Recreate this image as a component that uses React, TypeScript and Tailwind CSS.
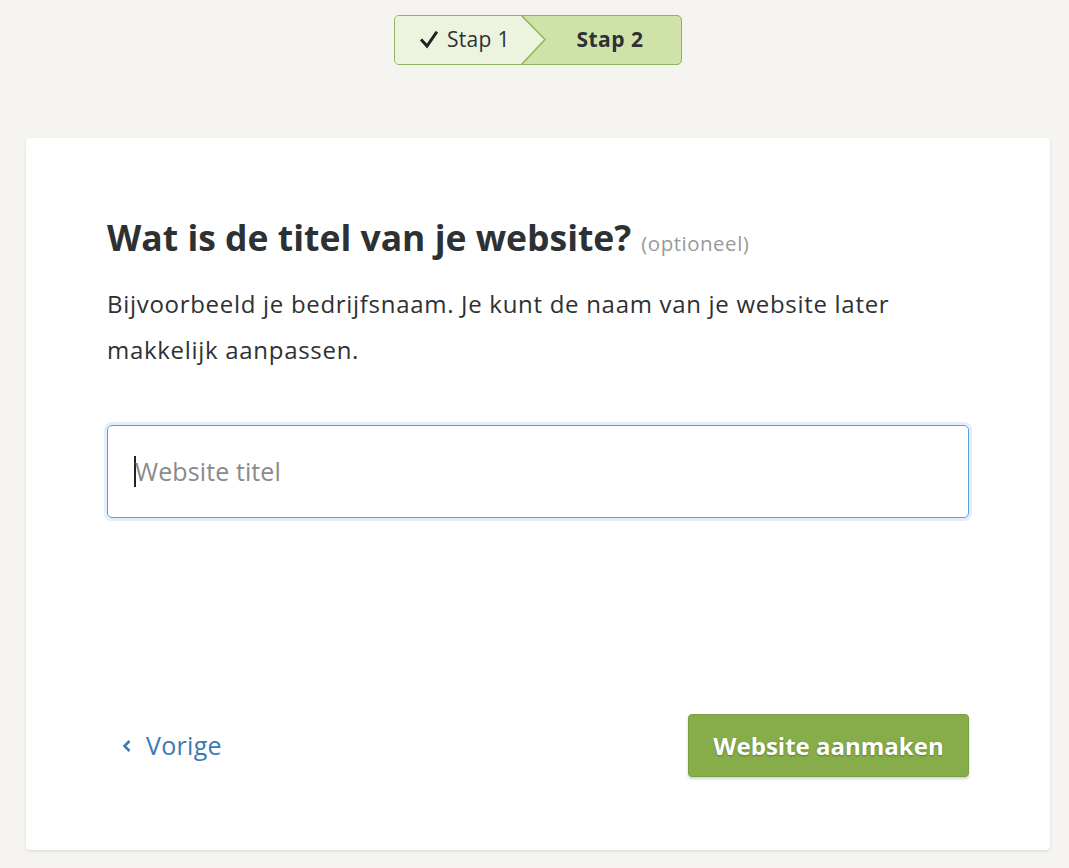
import React from "react";

export default function App() {
  return (
    <div
      className="h-[868px] w-full overflow-hidden bg-[#f5f4f0] pt-[15px] text-[#2d3133]"
      style={{ fontFamily: "'Open Sans', Lato, sans-serif" }}
    >
      <div className="flex justify-center pl-[7px]">
        <div className="relative flex h-[50px] w-[288px] overflow-hidden rounded-[5px] border border-[#8ab85a] bg-[#cfe2a8]">
          <div
            className="flex w-[150px] items-center bg-[#ecf4de] pl-[25px] text-[21px] tracking-[0.3px]"
            style={{ clipPath: "polygon(0 0, 126px 0, 150px 50%, 126px 100%, 0 100%)" }}
          >
            <svg width="18" height="18" viewBox="0 0 18 18" className="mr-[9px]">
              <path d="M2 9.5 L7 15 L16 2" fill="none" stroke="#222" strokeWidth="3" strokeLinecap="square" />
            </svg>
            <span>Stap 1</span>
          </div>
          <svg className="absolute left-[125px] top-[-1px]" width="27" height="50" viewBox="0 0 27 50">
            <path d="M1 0 L25 24.5 L1 50" fill="none" stroke="#8ab85a" strokeWidth="1.5" />
          </svg>
          <div className="flex flex-1 items-center justify-center pr-[6px] text-[21px] font-bold tracking-[0.5px]">Stap 2</div>
        </div>
      </div>

      <div className="ml-[26px] mr-[19px] mt-[73px] flex h-[712px] flex-col rounded-[4px] bg-white px-[81px] pt-[77px] pb-[72px] shadow-[0_1px_3px_rgba(0,0,0,0.12)]">
        <h1 className="flex items-baseline text-[35.5px] font-bold leading-[44px] text-[#2d3133]">
          Wat is de titel van je website?
          <span className="ml-[10px] text-[20.5px] font-normal tracking-[0.5px] text-[#9a9a9a]">(optioneel)</span>
        </h1>
        <p className="mt-[16px] text-[24px] leading-[46px] tracking-[0.7px] text-[#2d3133]">
          Bijvoorbeeld je bedrijfsnaam. Je kunt de naam van je website later
          <br />
          makkelijk aanpassen.
        </p>
        <div className="mt-[52px] rounded-[5px] shadow-[0_0_0_3px_#e3eef9]">
          <div className="flex h-[93px] items-center rounded-[5px] border border-[#5b9fd8] bg-white pl-[26px]">
            <span className="mr-[-1px] h-[31px] w-[2px] bg-[#222]" />
            <span className="text-[25px] tracking-[0.1px] text-[#8a8a8a]">Website titel</span>
          </div>
        </div>
        <div className="mt-auto flex items-center justify-between">
          <a className="flex items-center pl-[15px] text-[25px] tracking-[0.3px] text-[#3b79b3]">
            <svg width="10" height="14" viewBox="0 0 10 14" className="mr-[14px]">
              <path d="M7.5 2 L2.5 7 L7.5 12" fill="none" stroke="#3b79b3" strokeWidth="2.6" />
            </svg>
            Vorige
          </a>
          <button className="mb-[1px] h-[63px] w-[281px] rounded-[4px] border border-[#7a9f40] bg-[#86ad4a] text-[24px] font-bold text-white shadow-[0_2px_3px_rgba(0,0,0,0.18)] [text-shadow:0_1px_2px_rgba(0,0,0,0.3)]">
            Website aanmaken
          </button>
        </div>
      </div>
    </div>
  );
}
